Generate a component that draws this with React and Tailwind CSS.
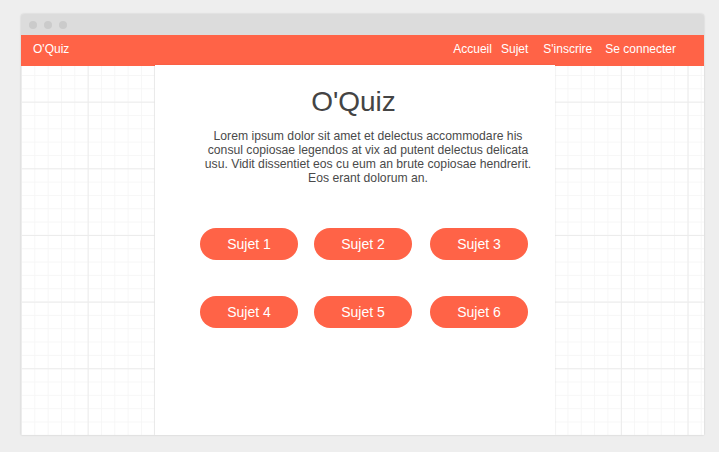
import React from "react";

const subjects = ["Sujet 1", "Sujet 2", "Sujet 3", "Sujet 4", "Sujet 5", "Sujet 6"];

function Btn({ label, className = "" }) {
  return (
    <button
      className={
        "w-[98px] h-[32px] rounded-full bg-[#ff6347] text-white text-[14px] leading-[32px] text-center " +
        className
      }
    >
      {label}
    </button>
  );
}

export default function App() {
  return (
    <div className="w-[719px] h-[452px] bg-[#eeeeee] pt-[14px] pl-[21px] font-['Liberation_Sans',Arial,sans-serif] overflow-hidden">
      <div className="w-[683px] h-[421px] flex flex-col rounded-t-[3px] overflow-hidden shadow-[0_0_2px_rgba(0,0,0,0.18)]">
        <div className="h-[21px] bg-[#dcdcdc] flex items-center pl-[8px] gap-[7px] shrink-0">
          <span className="w-[8px] h-[8px] rounded-full bg-[#cbcbcb]" />
          <span className="w-[8px] h-[8px] rounded-full bg-[#cbcbcb]" />
          <span className="w-[8px] h-[8px] rounded-full bg-[#cbcbcb]" />
        </div>
        <div className="relative flex-1 bg-white bg-[linear-gradient(to_right,#ececec_1px,transparent_1px),linear-gradient(to_bottom,#ececec_1px,transparent_1px),linear-gradient(to_right,#f6f6f6_1px,transparent_1px),linear-gradient(to_bottom,#f6f6f6_1px,transparent_1px)] bg-size-[66.667px_66.667px,66.667px_66.667px,13.333px_13.333px,13.333px_13.333px] flex flex-col">
          <header className="h-[31px] bg-[#ff6347] text-white text-[12px] leading-[14px] flex items-start pt-[7px] pl-[12px] pr-[28px] shrink-0">
            <span>O'Quiz</span>
            <nav className="ml-auto flex">
              <span>Accueil</span>
              <span className="ml-[9px]">Sujet</span>
              <span className="ml-[15px]">S'inscrire</span>
              <span className="ml-[13px]">Se connecter</span>
            </nav>
          </header>
          <main className="ml-[134px] -mt-[1px] w-[400px] flex-1 bg-white shadow-[0_0_2px_rgba(0,0,0,0.08)] pt-[21px]">
            <h1 className="text-[28px] leading-[32px] text-center text-[#444444] font-normal -ml-[3px]">O'Quiz</h1>
            <p className="mt-[11px] ml-[43px] w-[340px] text-[12.2px] leading-[14px] text-center text-[#4a4a4a]">
              Lorem ipsum dolor sit amet et delectus accommodare his consul copiosae legendos at vix ad putent delectus delicata usu. Vidit dissentiet eos cu eum an brute copiosae hendrerit. Eos erant dolorum an.
            </p>
            <div className="mt-[43px] ml-[45px] flex flex-col gap-[36px]">
              <div className="flex">
                <Btn label={subjects[0]} />
                <Btn label={subjects[1]} className="ml-[16px]" />
                <Btn label={subjects[2]} className="ml-[18px]" />
              </div>
              <div className="flex">
                <Btn label={subjects[3]} />
                <Btn label={subjects[4]} className="ml-[16px]" />
                <Btn label={subjects[5]} className="ml-[18px]" />
              </div>
            </div>
          </main>
        </div>
      </div>
    </div>
  );
}
